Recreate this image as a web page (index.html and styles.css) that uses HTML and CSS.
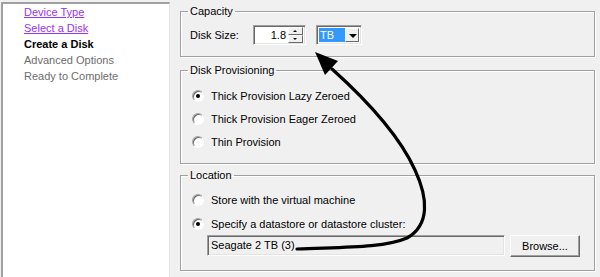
FILE: index.html
```html
<!DOCTYPE html>
<html lang="en">
<head>
<meta charset="utf-8">
<title>Create a Disk</title>
<link rel="stylesheet" href="styles.css">
</head>
<body>
<div class="wizard">
  <nav class="steps">
    <a class="step done">Device Type</a>
    <a class="step done">Select a Disk</a>
    <span class="step current">Create a Disk</span>
    <span class="step pending">Advanced Options</span>
    <span class="step pending">Ready to Complete</span>
  </nav>
  <main class="content">
    <fieldset class="group capacity">
      <legend>Capacity</legend>
      <div class="size-row">
        <span class="label">Disk Size:</span>
        <div class="spin sunken">
          <span class="spin-value">1.8</span>
          <div class="spin-btns">
            <span class="sb up"></span>
            <span class="sb down"></span>
          </div>
        </div>
        <div class="combo sunken">
          <span class="combo-sel">TB</span>
          <span class="combo-btn"></span>
        </div>
      </div>
    </fieldset>
    <fieldset class="group provisioning">
      <legend>Disk Provisioning</legend>
      <label class="radio-row"><span class="radio checked"></span>Thick Provision Lazy Zeroed</label>
      <label class="radio-row"><span class="radio"></span>Thick Provision Eager Zeroed</label>
      <label class="radio-row"><span class="radio"></span>Thin Provision</label>
    </fieldset>
    <fieldset class="group location">
      <legend>Location</legend>
      <label class="radio-row r1"><span class="radio"></span>Store with the virtual machine</label>
      <label class="radio-row r2"><span class="radio checked"></span>Specify a datastore or datastore cluster:</label>
      <div class="path-row">
        <div class="field sunken">Seagate 2 TB (3)</div>
        <button class="button">Browse...</button>
      </div>
    </fieldset>
  </main>
  <svg class="arrow" width="600" height="277" viewBox="0 0 600 277">
    <path d="M297,249 C342,247 384,248 407,238 C430,225 428,198 415,170 C400,137 371,104 332,69" fill="none" stroke="#000" stroke-width="3.2" stroke-linecap="round"/>
    <polygon points="315,52 338,61 325,75" fill="#000"/>
  </svg>
</div>
</body>
</html>
```

FILE: styles.css
```css
* { box-sizing: border-box; }

html, body {
  margin: 0;
  padding: 0;
  background: #f0f0f0;
}

body {
  font-family: "Liberation Sans", Arial, sans-serif;
  font-size: 11px;
  color: #000;
}

.wizard {
  position: relative;
  width: 600px;
  height: 277px;
  display: flex;
  overflow: hidden;
}

.steps {
  margin-top: 2px;
  margin-left: 1px;
  flex: 0 0 169px;
  background: #fff;
  border-left: 2px solid #a0a0a0;
  border-top: 2px solid #a0a0a0;
  border-right: 1px solid #e3e3e3;
  padding: 0 0 0 21px;
  display: flex;
  flex-direction: column;
}

.step {
  line-height: 16px;
  height: 16px;
  white-space: nowrap;
}

.step.done {
  color: #9933ee;
  text-decoration: underline;
}

.step.current {
  font-weight: bold;
  color: #000;
}

.step.pending {
  color: #6d6d6d;
}

.content {
  flex: 1;
  padding: 5px 5px 0 10px;
  display: flex;
  flex-direction: column;
}

.group {
  margin: 0;
  width: 415px;
  border: 1px solid #a0a0a0;
  box-shadow: 1px 1px 0 #fff, inset 1px 1px 0 #fff;
  padding: 0 0 0 7px;
  min-width: 0;
}

.group legend {
  padding: 0 2px;
  line-height: 13px;
  height: 13px;
}

.capacity {
  padding-top: 7px;
  padding-bottom: 11px;
}

.size-row {
  display: flex;
  align-items: center;
  height: 20px;
  margin-left: 2px;
}

.label {
  width: 63px;
}

.sunken {
  border: 1px solid;
  border-color: #a0a0a0 #fff #fff #a0a0a0;
  box-shadow: inset 1px 1px 0 #696969, inset -1px -1px 0 #e3e3e3;
}

.spin {
  width: 53px;
  height: 20px;
  background: #fff;
  display: flex;
  align-items: center;
  padding: 2px;
}

.spin-value {
  flex: 1;
  text-align: right;
  padding-right: 2px;
}

.spin-btns {
  width: 15px;
  height: 16px;
  display: flex;
  flex-direction: column;
}

.sb {
  position: relative;
  flex: 1;
  background: #f0f0f0;
  border: 1px solid;
  border-color: #fff #696969 #696969 #fff;
}

.sb::after {
  content: "";
  position: absolute;
  left: 4px;
  top: 2px;
  border-left: 2px solid transparent;
  border-right: 2px solid transparent;
}

.sb.up::after {
  border-bottom: 2px solid #000;
}

.sb.down::after {
  border-top: 2px solid #000;
}

.combo {
  width: 46px;
  height: 20px;
  margin-left: 10px;
  background: #fff;
  display: flex;
  padding: 2px;
}

.combo-sel {
  width: 26px;
  background: #3399ff;
  color: #fff;
  line-height: 14px;
  padding-left: 1px;
}

.combo-btn {
  position: relative;
  flex: 1;
  background: #f0f0f0;
  border: 1px solid;
  border-color: #fff #696969 #696969 #fff;
}

.combo-btn::after {
  content: "";
  position: absolute;
  left: 3px;
  top: 5px;
  border-left: 4px solid transparent;
  border-right: 4px solid transparent;
  border-top: 4px solid #000;
}

.provisioning {
  margin-top: 7px;
  padding-top: 7px;
  padding-bottom: 10px;
}

.radio-row {
  display: flex;
  align-items: center;
  height: 23px;
  white-space: nowrap;
}

.radio {
  position: relative;
  width: 12px;
  height: 12px;
  margin-left: 4px;
  margin-right: 7px;
  border-radius: 50%;
  background: #fff;
  border: 1px solid;
  border-color: #a0a0a0 #fff #fff #a0a0a0;
  box-shadow: inset 1px 1px 0 #696969;
}

.radio.checked::after {
  content: "";
  position: absolute;
  left: 3px;
  top: 3px;
  width: 4px;
  height: 4px;
  border-radius: 50%;
  background: #000;
}

.location {
  margin-top: 5px;
  padding-top: 6px;
  padding-bottom: 13px;
}

.location .r1 { height: 24px; }
.location .r2 { height: 23px; }

.path-row {
  display: flex;
  align-items: flex-start;
  margin-left: 19px;
}

.field {
  width: 298px;
  height: 21px;
  background: #f0f0f0;
  padding: 3px;
  line-height: 13px;
}

.button {
  margin-left: 5px;
  width: 70px;
  height: 22px;
  font: inherit;
  color: #000;
  background: #f0f0f0;
  border: 1px solid;
  border-color: #fff #696969 #696969 #fff;
  box-shadow: inset -1px -1px 0 #a0a0a0;
  padding: 0;
}

.arrow {
  position: absolute;
  left: 0;
  top: 0;
  pointer-events: none;
}
```
